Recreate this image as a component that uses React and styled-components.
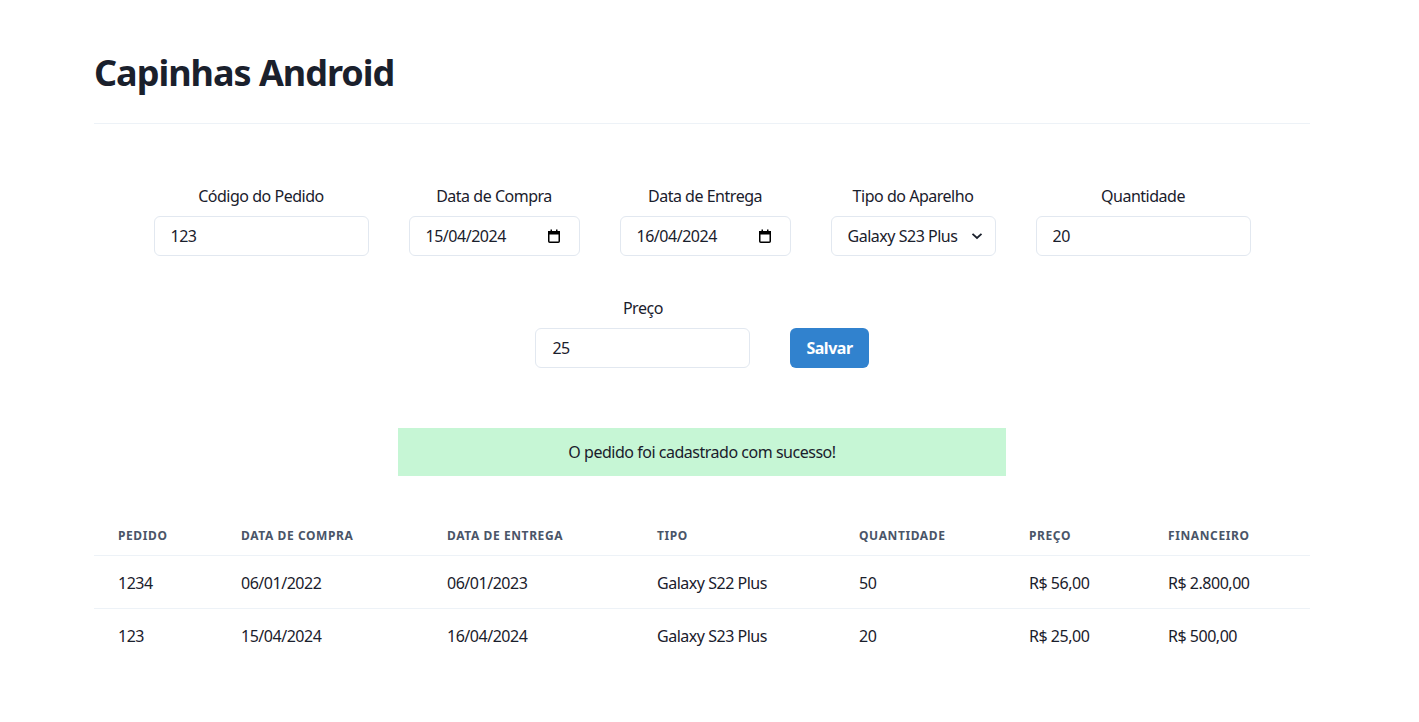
import React from 'react';
import styled, { createGlobalStyle } from 'styled-components';

const GlobalStyle = createGlobalStyle`
  * { box-sizing: border-box; }
  body {
    margin: 0;
    background: #ffffff;
    color: #1A202C;
    font-family: "Segoe UI", "Noto Sans", "Open Sans", sans-serif;
    letter-spacing: -0.03em;
  }
`;

const Page = styled.div`
  width: 1404px;
  padding: 51px 94px 40px;
`;

const Title = styled.h1`
  margin: 0;
  font-size: 36px;
  line-height: 1.2;
  font-weight: 700;
  letter-spacing: -0.028em;
  color: #1A202C;
`;

const Divider = styled.hr`
  margin: 29px 0 0;
  border: 0;
  border-top: 1px solid #EDF2F7;
`;

const FormRow = styled.div`
  display: flex;
  justify-content: center;
  align-items: flex-end;
  gap: 40px;
  margin-top: ${(p) => p.$top}px;
`;

const Field = styled.div`
  display: flex;
  flex-direction: column;
  align-items: center;
  width: ${(p) => p.$width}px;
`;

const Label = styled.label`
  font-size: 16px;
  line-height: 24px;
  margin-bottom: 8px;
  text-align: center;
`;

const Control = styled.div`
  position: relative;
  width: 100%;
  height: 40px;
`;

const Input = styled.input`
  width: 100%;
  height: 40px;
  padding: 0 16px;
  border: 1px solid #E2E8F0;
  border-radius: 6px;
  font-family: inherit;
  font-size: 16px;
  letter-spacing: inherit;
  color: #1A202C;
  background: #fff;
  outline: none;
  appearance: none;
`;

const Select = styled.select`
  width: 100%;
  height: 40px;
  padding: 0 30px 0 16px;
  border: 1px solid #E2E8F0;
  border-radius: 6px;
  font-family: inherit;
  font-size: 16px;
  letter-spacing: inherit;
  color: #1A202C;
  background: #fff;
  outline: none;
  appearance: none;
`;

const TrailingIcon = styled.span`
  position: absolute;
  top: 0;
  right: ${(p) => p.$right}px;
  height: 40px;
  display: flex;
  align-items: center;
  pointer-events: none;
`;

const Button = styled.button`
  height: 40px;
  padding: 0 16px;
  border: 0;
  border-radius: 6px;
  background: #3182CE;
  color: #fff;
  font-family: inherit;
  font-size: 16px;
  letter-spacing: inherit;
  font-weight: 700;
  cursor: pointer;
`;

const Alert = styled.div`
  width: 608px;
  margin: 60px auto 0;
  padding: 12px 16px;
  background: #C6F6D5;
  font-size: 16px;
  line-height: 24px;
  text-align: center;
`;

const Table = styled.table`
  width: 100%;
  margin-top: 39px;
  border-collapse: collapse;
  table-layout: fixed;
`;

const Th = styled.th`
  text-align: left;
  padding: 13px 24px 11px;
  font-size: 12px;
  line-height: 16px;
  font-weight: 700;
  letter-spacing: 0.05em;
  text-transform: uppercase;
  color: #4A5568;
  border-bottom: 1px solid #EDF2F7;
`;

const Td = styled.td`
  padding: 17px 24px 15px;
  font-size: 16px;
  line-height: 20px;
  border-bottom: 1px solid ${(p) => (p.$last ? 'transparent' : '#EDF2F7')};
`;

function CalendarIcon() {
  return (
    <svg width="14" height="14" viewBox="0 0 14 14">
      <rect x="1.75" y="2.75" width="10.5" height="10.5" rx="1" fill="none" stroke="#000" strokeWidth="1.5" />
      <rect x="1" y="2" width="12" height="3.5" fill="#000" />
      <rect x="3.5" y="0.5" width="1.5" height="2" fill="#000" />
      <rect x="9" y="0.5" width="1.5" height="2" fill="#000" />
    </svg>
  );
}

function ChevronIcon() {
  return (
    <svg width="12" height="8" viewBox="0 0 12 8">
      <path d="M1.5 1.8 L6 6 L10.5 1.8" fill="none" stroke="#1A202C" strokeWidth="1.8" />
    </svg>
  );
}

const columns = [
  { label: 'Pedido', width: 123 },
  { label: 'Data de Compra', width: 206 },
  { label: 'Data de Entrega', width: 210 },
  { label: 'Tipo', width: 202 },
  { label: 'Quantidade', width: 170 },
  { label: 'Preço', width: 139 },
  { label: 'Financeiro', width: 166 },
];

const pedidos = [
  ['1234', '06/01/2022', '06/01/2023', 'Galaxy S22 Plus', '50', 'R$ 56,00', 'R$ 2.800,00'],
  ['123', '15/04/2024', '16/04/2024', 'Galaxy S23 Plus', '20', 'R$ 25,00', 'R$ 500,00'],
];

export default function App() {
  return (
    <Page>
      <GlobalStyle />
      <Title>Capinhas Android</Title>
      <Divider />

      <FormRow $top={60}>
        <Field $width={215}>
          <Label>Código do Pedido</Label>
          <Control>
            <Input defaultValue="123" />
          </Control>
        </Field>
        <Field $width={171}>
          <Label>Data de Compra</Label>
          <Control>
            <Input defaultValue="15/04/2024" />
            <TrailingIcon $right={19}><CalendarIcon /></TrailingIcon>
          </Control>
        </Field>
        <Field $width={171}>
          <Label>Data de Entrega</Label>
          <Control>
            <Input defaultValue="16/04/2024" />
            <TrailingIcon $right={19}><CalendarIcon /></TrailingIcon>
          </Control>
        </Field>
        <Field $width={165}>
          <Label>Tipo do Aparelho</Label>
          <Control>
            <Select defaultValue="s23">
              <option value="s22">Galaxy S22 Plus</option>
              <option value="s23">Galaxy S23 Plus</option>
            </Select>
            <TrailingIcon $right={13}><ChevronIcon /></TrailingIcon>
          </Control>
        </Field>
        <Field $width={215}>
          <Label>Quantidade</Label>
          <Control>
            <Input defaultValue="20" />
          </Control>
        </Field>
      </FormRow>

      <FormRow $top={40}>
        <Field $width={215}>
          <Label>Preço</Label>
          <Control>
            <Input defaultValue="25" />
          </Control>
        </Field>
        <Button>Salvar</Button>
      </FormRow>

      <Alert>O pedido foi cadastrado com sucesso!</Alert>

      <Table>
        <colgroup>
          {columns.map((c) => (
            <col key={c.label} style={{ width: c.width }} />
          ))}
        </colgroup>
        <thead>
          <tr>
            {columns.map((c) => (
              <Th key={c.label}>{c.label}</Th>
            ))}
          </tr>
        </thead>
        <tbody>
          {pedidos.map((row, i) => (
            <tr key={row[0]}>
              {row.map((cell, j) => (
                <Td key={j} $last={i === pedidos.length - 1}>{cell}</Td>
              ))}
            </tr>
          ))}
        </tbody>
      </Table>
    </Page>
  );
}
